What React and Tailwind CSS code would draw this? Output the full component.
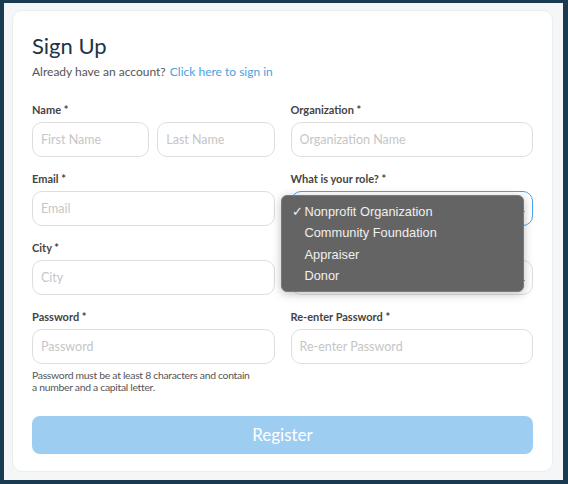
import React from "react";

const font = { fontFamily: "Lato, 'Noto Sans', sans-serif" };

function Label({ children }) {
  return (
    <label className="block h-[14px] text-[11px] font-bold text-[#444] leading-[14px] mb-[5px]">
      {children}
    </label>
  );
}

function Field({ placeholder, className = "" }) {
  return (
    <input
      type="text"
      placeholder={placeholder}
      className={
        "block h-[35px] w-full rounded-[10px] border border-[#dedede] bg-white px-[8px] text-[12.5px] text-[#333] placeholder:text-[#c6c6c6] outline-none " +
        className
      }
    />
  );
}

function Chevron() {
  return (
    <svg width="8" height="8" viewBox="0 0 8 8" className="absolute right-[6px] bottom-[8px]">
      <path d="M1 6 L6 1" stroke="#999" strokeWidth="1" fill="none" />
    </svg>
  );
}

function RoleMenu() {
  const items = ["Nonprofit Organization", "Community Foundation", "Appraiser", "Donor"];
  return (
    <div
      className="absolute left-[-10px] top-[4px] w-[243px] rounded-[6px] bg-[#646464] pt-[5px] pb-[4px] shadow-[0_2px_10px_rgba(0,0,0,0.25)] border border-[#7a7a7a]"
      style={{ fontFamily: "'Liberation Sans', Arial, sans-serif" }}
    >
      {items.map((item, i) => (
        <div key={item} className="flex items-center h-[21.4px] text-[12.8px] text-[#f0f0f0]">
          <span className="w-[23px] pl-[10px] text-[13px]">{i === 0 ? "✓" : ""}</span>
          <span>{item}</span>
        </div>
      ))}
    </div>
  );
}

export default function App() {
  return (
    <div className="w-[568px] h-[484px] bg-[#1a3a52] pt-[3px] pl-[4px] pr-[5px] pb-[4px]" style={font}>
      <div className="h-full bg-[#f4f6f8] pt-[7px] pl-[8px] pr-[10px] pb-[8px]">
        <div className="h-full rounded-[10px] border border-[#e9edf0] bg-white px-[19px] pt-[21px]">
          <h1 className="text-[22px] leading-[28px] text-[#1d3346]">Sign Up</h1>
          <p className="mt-[4px] text-[12px] leading-[16px] text-[#555]">
            Already have an account?{" "}
            <a className="ml-[1px] text-[#4a9fe0]">Click here to sign in</a>
          </p>

          <div className="mt-[23px] grid grid-cols-2 gap-x-[16px]">
            <div>
              <Label>Name *</Label>
              <div className="flex gap-[8px]">
                <Field placeholder="First Name" />
                <Field placeholder="Last Name" />
              </div>
            </div>
            <div>
              <Label>Organization *</Label>
              <Field placeholder="Organization Name" />
            </div>

            <div className="mt-[15px]">
              <Label>Email *</Label>
              <Field placeholder="Email" />
            </div>
            <div className="mt-[15px] relative z-10">
              <Label>What is your role? *</Label>
              <div className="relative">
                <div className="h-[35px] w-full rounded-[10px] border border-[#4aa3e8] bg-white" />
                <Chevron />
                <RoleMenu />
              </div>
            </div>

            <div className="mt-[15px]">
              <Label>City *</Label>
              <Field placeholder="City" />
            </div>
            <div className="mt-[15px]">
              <div className="h-[14px] mb-[5px]" />
              <div className="relative">
                <div className="h-[35px] w-full rounded-[10px] border border-[#dedede] bg-white" />
                <Chevron />
              </div>
            </div>

            <div className="mt-[15px]">
              <Label>Password *</Label>
              <Field placeholder="Password" />
              <p className="mt-[5px] w-[224px] text-[10.4px] leading-[12px] tracking-[-0.3px] text-[#555]">
                Password must be at least 8 characters and contain a number and a capital letter.
              </p>
            </div>
            <div className="mt-[15px]">
              <Label>Re-enter Password *</Label>
              <Field placeholder="Re-enter Password" />
            </div>
          </div>

          <button className="mt-[23px] h-[38px] w-full rounded-[8px] bg-[#9dcdf1] text-[17px] text-white">
            Register
          </button>
        </div>
      </div>
    </div>
  );
}
